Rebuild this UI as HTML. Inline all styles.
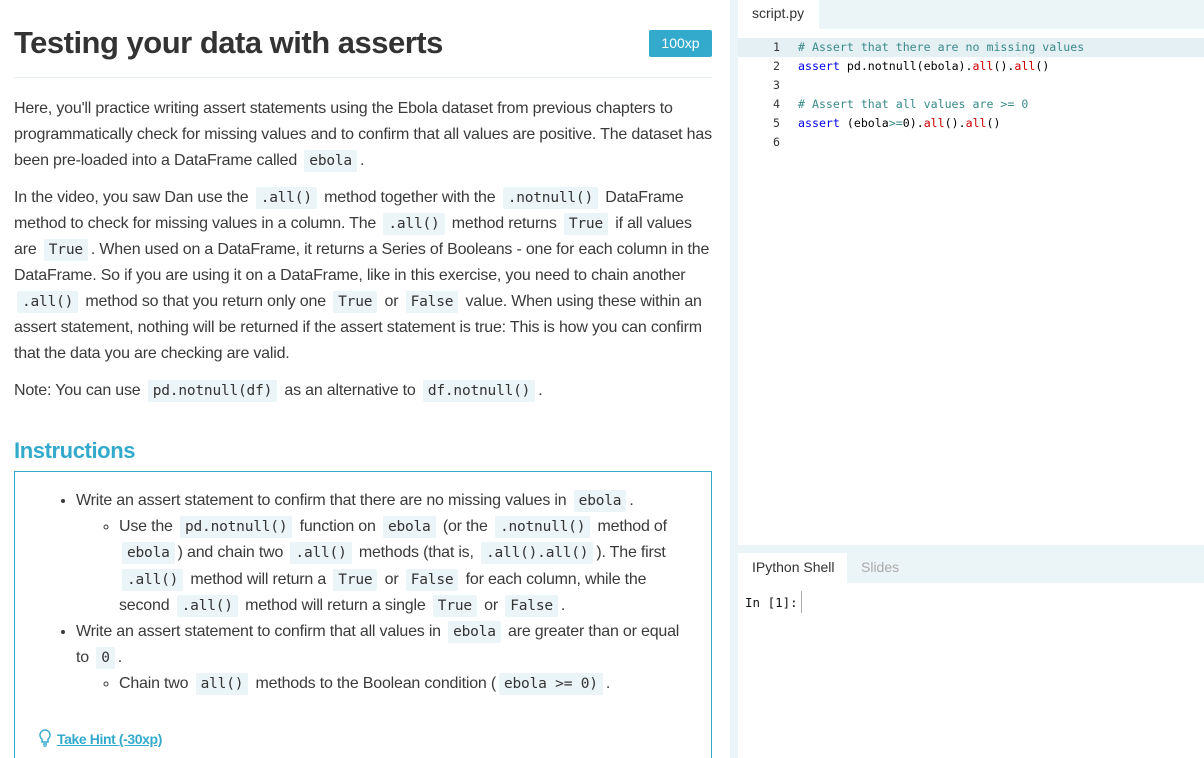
<!DOCTYPE html>
<html><head><meta charset="utf-8"><style>
*{margin:0;padding:0;box-sizing:border-box}
html,body{width:1204px;height:758px;overflow:hidden}
body{background:#fff;font-family:"Liberation Sans",sans-serif;color:#3a3a3a;position:relative}
.left{position:absolute;left:14px;top:0;width:698px}
h1{position:absolute;top:25px;left:0;font-size:31px;font-weight:bold;letter-spacing:-0.5px;color:#333}
.badge{position:absolute;left:635px;top:30px;width:63px;height:27px;background:#33aacc;color:#fff;font-size:14px;text-align:center;line-height:27px;border-radius:2px}
.hr{position:absolute;top:77px;left:0;width:698px;height:1px;background:#e6eef2}
.txt{position:absolute;top:96px;left:0;width:700px;font-size:16px;line-height:26px;letter-spacing:-0.2px}
.txt p{margin-bottom:11px}
code{font-family:"DejaVu Sans Mono","Liberation Mono",monospace;font-size:14.5px;letter-spacing:-0.2px;background:#ebf4f7;padding:3px 5px;margin:0 3px;border-radius:2px;color:#333}
h2{position:absolute;top:438px;left:0;font-size:22px;color:#33aacc;font-weight:bold;letter-spacing:-0.4px}
.box{position:absolute;top:471px;left:0;width:698px;height:300px;border:1px solid #33aacc}
.box ul{position:absolute;top:16px;left:44px;width:630px;font-size:16px;line-height:26.2px;letter-spacing:-0.2px}
.box ul ul{position:static;width:auto;margin-left:0;padding-left:26px;list-style:circle}
.box li{margin-left:17px}
.hint{position:absolute;left:24px;top:257px;font-size:14px;font-weight:bold;color:#33aacc;letter-spacing:-0.4px}
.hint span{text-decoration:underline;margin-left:6px}
.strip{position:absolute;left:730px;top:0;width:8px;height:758px;background:#ebf4f7}
.tabs{position:absolute;left:738px;top:0;width:466px;height:29px;background:#ebf4f7}
.tab{position:absolute;left:0;top:0;width:81px;height:29px;background:#fff;font-size:14px;padding:5px 0 0 14px;color:#333}
.ed{position:absolute;left:738px;top:38px;width:466px;font-family:"DejaVu Sans Mono","Liberation Mono",monospace;font-size:11.6px}
.ln{height:19px;line-height:19px;position:relative;white-space:pre}
.ln.hl{background:#e4f0f4}
.ln b{font-weight:normal;position:absolute;left:0;width:42px;text-align:right;color:#333}
.ln i{font-style:normal;position:absolute;left:60px;color:#000}
.c{color:#3a8a8a}.k{color:#0000ee}.f{color:#c00}
.shtabs{position:absolute;left:738px;top:545px;width:466px;height:38px;background:#ebf4f7}
.shtab{position:absolute;left:0;top:8px;width:109px;height:30px;background:#fff;font-size:14px;padding:6px 0 0 14px;color:#333}
.slides{position:absolute;left:123px;top:14px;font-size:14px;color:#aaa}
.prompt{position:absolute;left:745px;top:595px;font-family:"DejaVu Sans Mono","Liberation Mono",monospace;font-size:12.5px;color:#111}
.cursor{position:absolute;left:801px;top:591px;width:1px;height:22px;background:#aaa}
</style></head><body>
<div class="left">
<h1>Testing your data with asserts</h1>
<div class="badge">100xp</div>
<div class="hr"></div>
<div class="txt">
<p>Here, you'll practice writing assert statements using the Ebola dataset from previous chapters to programmatically check for missing values and to confirm that all values are positive. The dataset has been pre-loaded into a DataFrame called <code>ebola</code>.</p>
<p>In the video, you saw Dan use the <code>.all()</code> method together with the <code>.notnull()</code> DataFrame method to check for missing values in a column. The <code>.all()</code> method returns <code>True</code> if all values are <code>True</code>. When used on a DataFrame, it returns a Series of Booleans - one for each column in the DataFrame. So if you are using it on a DataFrame, like in this exercise, you need to chain another <code>.all()</code> method so that you return only one <code>True</code> or <code>False</code> value. When using these within an assert statement, nothing will be returned if the assert statement is true: This is how you can confirm that the data you are checking are valid.</p>
<p>Note: You can use <code>pd.notnull(df)</code> as an alternative to <code>df.notnull()</code>.</p>
</div>
<h2>Instructions</h2>
<div class="box">
<ul>
<li>Write an assert statement to confirm that there are no missing values in <code>ebola</code>.
<ul><li>Use the <code>pd.notnull()</code> function on <code>ebola</code> (or the <code>.notnull()</code> method of <code>ebola</code>) and chain two <code>.all()</code> methods (that is, <code>.all().all()</code>). The first <code>.all()</code> method will return a <code>True</code> or <code>False</code> for each column, while the second <code>.all()</code> method will return a single <code>True</code> or <code>False</code>.</li></ul></li>
<li>Write an assert statement to confirm that all values in <code>ebola</code> are greater than or equal to <code>0</code>.
<ul><li>Chain two <code>all()</code> methods to the Boolean condition (<code>ebola &gt;= 0)</code>.</li></ul></li>
</ul>
<div class="hint"><svg width="12" height="18" viewBox="0 0 12 18" style="vertical-align:-3px"><path d="M6 1a5 5 0 0 0-3 9v3h6v-3a5 5 0 0 0-3-9zM4 15h4M4.5 17h3" fill="none" stroke="#33aacc" stroke-width="1.5"/></svg><span>Take Hint (-30xp)</span></div>
</div>
</div>
<div class="strip"></div>
<div class="tabs"><div class="tab">script.py</div></div>
<div class="ed">
<div class="ln hl"><b>1</b><i><span class="c"># Assert that there are no missing values</span></i></div>
<div class="ln"><b>2</b><i><span class="k">assert</span> pd.notnull(ebola).<span class="f">all</span>().<span class="f">all</span>()</i></div>
<div class="ln"><b>3</b></div>
<div class="ln"><b>4</b><i><span class="c"># Assert that all values are &gt;= 0</span></i></div>
<div class="ln"><b>5</b><i><span class="k">assert</span> (ebola<span class="c">&gt;=</span>0).<span class="f">all</span>().<span class="f">all</span>()</i></div>
<div class="ln"><b>6</b></div>
</div>
<div class="shtabs"><div class="shtab">IPython Shell</div><div class="slides">Slides</div></div>
<div class="prompt">In [1]:</div>
<div class="cursor"></div>
</body></html>
